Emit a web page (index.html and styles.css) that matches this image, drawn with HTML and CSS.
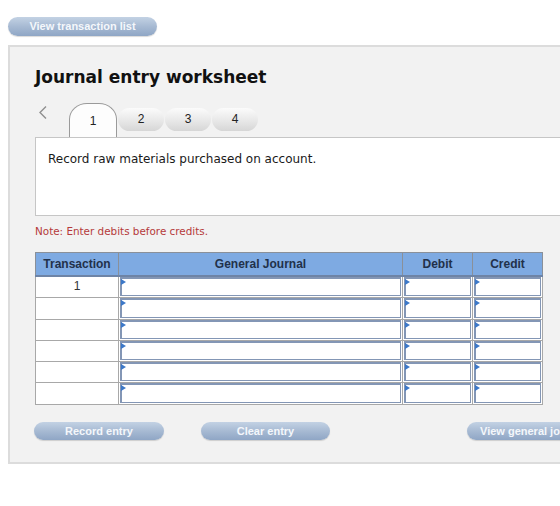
FILE: index.html
```html
<!DOCTYPE html>
<html>
<head>
<meta charset="utf-8">
<link rel="stylesheet" href="styles.css">
</head>
<body>
<div class="page">
  <button class="pill pill-top">View transaction list</button>
  <div class="panel">
    <h1 class="title">Journal entry worksheet</h1>
    <div class="tabs">
      <span class="prev"><svg width="10" height="15" viewBox="0 0 10 15"><polyline points="8,1.5 2,7.5 8,13.5" fill="none" stroke="#8f8f8f" stroke-width="1.4"/></svg></span>
      <span class="tab active">1</span>
      <span class="tab">2</span>
      <span class="tab">3</span>
      <span class="tab">4</span>
    </div>
    <div class="desc">Record raw materials purchased on account.</div>
    <div class="note">Note: Enter debits before credits.</div>
    <table class="journal">
      <thead>
        <tr><th class="c-tr">Transaction</th><th class="c-gj">General Journal</th><th class="c-amt">Debit</th><th class="c-amt">Credit</th></tr>
      </thead>
      <tbody>
        <tr><td class="tr">1</td><td class="in"><div class="box"></div></td><td class="in"><div class="box"></div></td><td class="in"><div class="box"></div></td></tr>
        <tr><td class="tr"></td><td class="in"><div class="box"></div></td><td class="in"><div class="box"></div></td><td class="in"><div class="box"></div></td></tr>
        <tr><td class="tr"></td><td class="in"><div class="box"></div></td><td class="in"><div class="box"></div></td><td class="in"><div class="box"></div></td></tr>
        <tr><td class="tr"></td><td class="in"><div class="box"></div></td><td class="in"><div class="box"></div></td><td class="in"><div class="box"></div></td></tr>
        <tr><td class="tr"></td><td class="in"><div class="box"></div></td><td class="in"><div class="box"></div></td><td class="in"><div class="box"></div></td></tr>
        <tr><td class="tr"></td><td class="in"><div class="box"></div></td><td class="in"><div class="box"></div></td><td class="in"><div class="box"></div></td></tr>
      </tbody>
    </table>
    <div class="actions">
      <button class="pill pill-rec">Record entry</button>
      <button class="pill pill-clear">Clear entry</button>
      <button class="pill pill-view">View general journal</button>
    </div>
  </div>
</div>
</body>
</html>
```

FILE: styles.css
```css
html, body {
  margin: 0;
  padding: 0;
  background: #ffffff;
  overflow: hidden;
}
.page {
  padding: 17px 0 0 8px;
  width: 760px;
}
.pill {
  display: block;
  border: none;
  border-radius: 10px;
  background: linear-gradient(#c3d2e4, #a7bad3 50%, #8fa6c5);
  color: #f4f7fb;
  font-family: "Liberation Sans", Arial, sans-serif;
  font-weight: bold;
  font-size: 11px;
  padding: 0;
  height: 19px;
  line-height: 19px;
  text-align: center;
  box-shadow: 0 1px 1px rgba(0,0,0,0.15);
}
.pill-top {
  width: 149px;
}
.panel {
  margin-top: 9px;
  width: 700px;
  height: 419px;
  box-sizing: border-box;
  background: #f2f2f2;
  border: 2px solid #dcdcdc;
  padding: 0 0 0 25px;
}
.title {
  margin: 18px 0 0 0;
  font-family: "DejaVu Sans", Verdana, sans-serif;
  font-weight: bold;
  font-size: 17px;
  line-height: 24px;
  color: #111;
}
.tabs {
  display: flex;
  align-items: flex-start;
  height: 34px;
  margin-top: 14px;
  font-family: "Liberation Sans", Arial, sans-serif;
  font-size: 12px;
  color: #222;
}
.prev {
  width: 34px;
  padding-left: 3px;
  padding-top: 2px;
  box-sizing: border-box;
  display: flex;
}
.tab {
  width: 46px;
  height: 23px;
  line-height: 23px;
  text-align: center;
  border-radius: 12px;
  background: linear-gradient(#fbfbfb, #e6e6e6 60%, #d6d6d6);
  margin-right: 1px;
  margin-top: 5px;
}
.tab.active {
  width: 46px;
  height: 33px;
  line-height: 34px;
  margin-top: 0;
  background: #fdfdfd;
  border: 1px solid #9a9a9a;
  border-bottom: none;
  border-radius: 18px 18px 0 0 / 16px 16px 0 0;
  margin-right: 1px;
  position: relative;
  z-index: 1;
}
.desc {
  margin-top: 0;
  height: 79px;
  box-sizing: border-box;
  background: #ffffff;
  border: 1px solid #c6c6c6;
  padding: 14px 0 0 12px;
  font-family: "DejaVu Sans", Verdana, sans-serif;
  font-size: 12px;
  color: #1a1a1a;
}
.note {
  margin-top: 8px;
  font-family: "DejaVu Sans", Verdana, sans-serif;
  font-size: 10.4px;
  color: #b53a3a;
  line-height: 14px;
}
.journal {
  margin-top: 14px;
  border-collapse: collapse;
  background: #ffffff;
  font-family: "Liberation Sans", Arial, sans-serif;
}
.journal th {
  background: #7eaae2;
  border: 1px solid #8a9099;
  border-bottom: 2px solid #6e84a6;
  height: 21px;
  font-size: 12px;
  font-weight: bold;
  color: #22314a;
  padding: 0 0 1px 0;
}
.c-tr { width: 82px; }
.c-gj { width: 283px; }
.c-amt { width: 69px; }
.journal td {
  border: 1px solid #a8a8a8;
  padding: 0;
  vertical-align: top;
}
.journal td.tr {
  text-align: center;
  font-size: 12px;
  color: #333;
  line-height: 19px;
}
.journal td.in {
  padding: 0 1px 1px 1px;
}
.box {
  position: relative;
  height: 16.3px;
  border: 2px solid #8396b5;
  border-bottom-width: 1px;
  border-right-width: 1px;
  background: #fff;
}
.box::before {
  content: "";
  position: absolute;
  left: -1px;
  top: 0;
  border-left: 5px solid #3c78c8;
  border-top: 3px solid transparent;
  border-bottom: 3px solid transparent;
}
.actions {
  display: flex;
  margin-top: 17px;
  margin-left: -1px;
}
.pill-rec { width: 130px; height: 18px; line-height: 18px; }
.pill-clear { width: 129px; height: 18px; line-height: 18px; margin-left: 37px; }
.pill-view { width: 140px; height: 18px; line-height: 18px; margin-left: 137px; text-align: left; padding-left: 13px; }
```
